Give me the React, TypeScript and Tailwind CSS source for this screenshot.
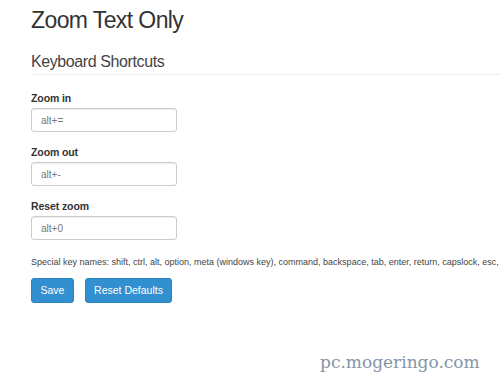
import React from 'react';

const fields = [
  { label: 'Zoom in', value: 'alt+=' },
  { label: 'Zoom out', value: 'alt+-' },
  { label: 'Reset zoom', value: 'alt+0' },
];

export default function App() {
  return (
    <div
      className="relative w-[500px] h-[383px] overflow-hidden bg-white text-[#333] pl-[31px] pt-[7px]"
      style={{ fontFamily: '"Liberation Sans", Arial, sans-serif' }}
    >
      <h1 className="text-[23px] leading-[26px] font-normal tracking-[-0.6px]">Zoom Text Only</h1>

      <h3 className="mt-[19px] text-[16px] leading-[20px] font-normal text-[#444] tracking-[-0.4px] pb-[2px] border-b border-[#eee] w-[600px]">
        Keyboard Shortcuts
      </h3>

      <div className="mt-[16px] flex flex-col gap-[13px]">
        {fields.map((f) => (
          <div key={f.label} className="flex flex-col gap-[2px]">
            <label className="text-[10.5px] leading-[15px] font-bold text-[#333] tracking-[-0.1px]">{f.label}</label>
            <input
              readOnly
              value={f.value}
              className="w-[146px] h-[24px] pl-[9px] pr-[7px] text-[10px] text-[#777] border border-[#ccc] rounded-[3px] shadow-[inset_0_1px_1px_rgba(0,0,0,0.075)] outline-none"
            />
          </div>
        ))}
      </div>

      <p className="mt-[15px] text-[9px] leading-[14px] text-[#444] whitespace-nowrap">
        Special key names: shift, ctrl, alt, option, meta (windows key), command, backspace, tab, enter, return, capslock, esc, escape, space
      </p>

      <div className="mt-[9px] flex gap-[11px]">
        <button className="h-[25px] w-[43px] rounded-[3px] bg-[#3290d0] border border-[#2b83c0] text-white text-[10.5px]">
          Save
        </button>
        <button className="h-[25px] w-[87px] rounded-[3px] bg-[#3290d0] border border-[#2b83c0] text-white text-[10.5px]">
          Reset Defaults
        </button>
      </div>

      <div
        className="absolute left-[320px] top-[352px] text-[17px] leading-[20px] text-[#8595a8] [text-shadow:0_0_3px_#ffffff]"
        style={{ fontFamily: '"DejaVu Serif", serif' }}
      >
        pc.mogeringo.com
      </div>
    </div>
  );
}
